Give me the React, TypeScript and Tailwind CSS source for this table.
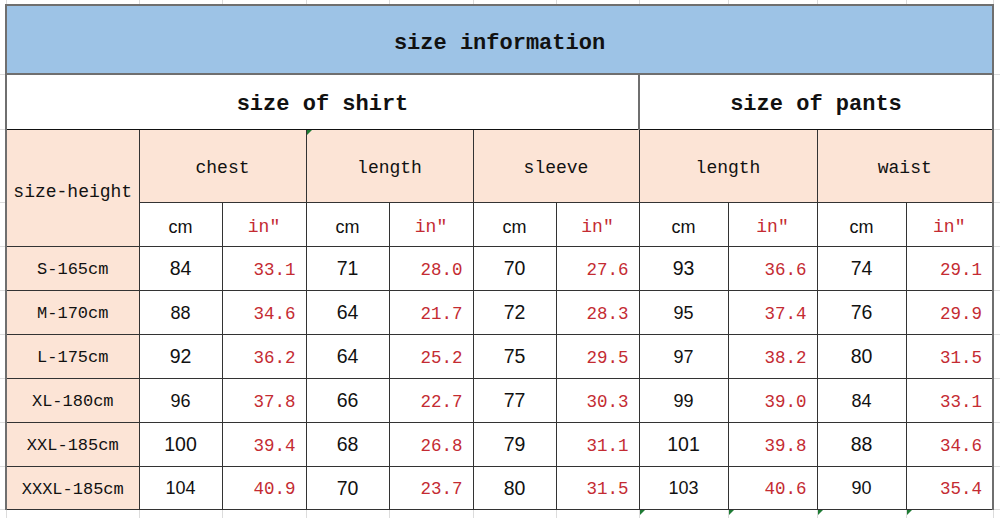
import React from 'react';

// column widths across the whole sheet, incl. the gutters left/right of the table
const COLS = [6, 133, 83, 84, 83, 84, 83, 83, 89, 89, 89, 87, 7];

type Cell = { v: number; big: boolean; inch: string };

const ROWS: { label: string; cells: Cell[] }[] = [
  {
    label: 'S-165cm',
    cells: [
      { v: 84, big: true, inch: '33.1' },
      { v: 71, big: true, inch: '28.0' },
      { v: 70, big: true, inch: '27.6' },
      { v: 93, big: true, inch: '36.6' },
      { v: 74, big: true, inch: '29.1' },
    ],
  },
  {
    label: 'M-170cm',
    cells: [
      { v: 88, big: false, inch: '34.6' },
      { v: 64, big: true, inch: '21.7' },
      { v: 72, big: true, inch: '28.3' },
      { v: 95, big: false, inch: '37.4' },
      { v: 76, big: true, inch: '29.9' },
    ],
  },
  {
    label: 'L-175cm',
    cells: [
      { v: 92, big: true, inch: '36.2' },
      { v: 64, big: true, inch: '25.2' },
      { v: 75, big: true, inch: '29.5' },
      { v: 97, big: false, inch: '38.2' },
      { v: 80, big: true, inch: '31.5' },
    ],
  },
  {
    label: 'XL-180cm',
    cells: [
      { v: 96, big: false, inch: '37.8' },
      { v: 66, big: true, inch: '22.7' },
      { v: 77, big: true, inch: '30.3' },
      { v: 99, big: false, inch: '39.0' },
      { v: 84, big: false, inch: '33.1' },
    ],
  },
  {
    label: 'XXL-185cm',
    cells: [
      { v: 100, big: true, inch: '39.4' },
      { v: 68, big: true, inch: '26.8' },
      { v: 79, big: true, inch: '31.1' },
      { v: 101, big: true, inch: '39.8' },
      { v: 88, big: true, inch: '34.6' },
    ],
  },
  {
    label: 'XXXL-185cm',
    cells: [
      { v: 104, big: false, inch: '40.9' },
      { v: 70, big: true, inch: '23.7' },
      { v: 80, big: true, inch: '31.5' },
      { v: 103, big: false, inch: '40.6' },
      { v: 90, big: false, inch: '35.4' },
    ],
  },
];

const MONO = "font-['Liberation_Mono',monospace]";
const SANS = "font-['Liberation_Sans',Arial,sans-serif]";

// green error marker Excel draws in a cell corner
const Flag = () => (
  <span className="absolute left-0 top-0 h-0 w-0 border-t-[5px] border-r-[5px] border-t-[#1e7b34] border-r-transparent" />
);

// thin gridline cells left / right of the table
const GutterL = () => <td className="border-b border-[#dcdcdc] p-0" />;
const GutterR = () => <td className="border-b border-[#dcdcdc] p-0" />;

const App: React.FC = () => {
  const head = 'border border-[#333] p-0 text-center';
  const flagged = [8, 9, 10, 11];

  return (
    <div className="h-[518px] w-[1000px] overflow-hidden bg-white text-[#111]">
      <table className="table-fixed border-collapse" style={{ width: 1000 }}>
        <colgroup>
          {COLS.map((w, i) => (
            <col key={i} style={{ width: w }} />
          ))}
        </colgroup>
        <tbody>
          {/* gridline strip above the table */}
          <tr className="h-[5px]">
            {COLS.map((_, i) => (
              <td key={i} className="border-r border-[#dcdcdc] p-0" />
            ))}
          </tr>

          <tr className="h-[69px]">
            <GutterL />
            <td
              colSpan={11}
              className={`border-2 border-[#6f6f6f] bg-[#9dc3e6] p-0 pt-[7px] text-center text-[22px] font-bold ${MONO}`}
            >
              size information
            </td>
            <GutterR />
          </tr>

          <tr className="h-[55px]">
            <GutterL />
            <td
              colSpan={7}
              className={`border-x-2 border-b border-x-[#6f6f6f] border-b-[#111] p-0 pt-[6px] text-center text-[22px] font-bold ${MONO}`}
            >
              size of shirt
            </td>
            <td
              colSpan={4}
              className={`border-r-2 border-l border-b border-r-[#6f6f6f] border-l-[#111] border-b-[#111] p-0 pt-[6px] text-center text-[22px] font-bold ${MONO}`}
            >
              size of pants
            </td>
            <GutterR />
          </tr>

          <tr className="h-[73px]">
            <GutterL />
            <td
              rowSpan={2}
              className={`${head} border-l-2 border-l-[#6f6f6f] bg-[#fce4d6] pt-[10px] text-[18px] ${MONO}`}
            >
              size-height
            </td>
            {['chest', 'length', 'sleeve', 'length', 'waist'].map((t, i) => (
              <td
                key={i}
                colSpan={2}
                className={`${head} relative bg-[#fce4d6] pt-[5px] text-[18px] ${MONO} ${i === 4 ? 'border-r-2 border-r-[#6f6f6f]' : ''}`}
              >
                {i === 1 && <Flag />}
                {t}
              </td>
            ))}
            <GutterR />
          </tr>

          <tr className="h-[44px]">
            <GutterL />
            {[0, 1, 2, 3, 4].map((i) => (
              <React.Fragment key={i}>
                <td className={`${head} pt-[6px] text-[18px] ${SANS}`}>cm</td>
                <td
                  className={`${head} pt-[6px] text-[18px] text-[#c42b32] ${MONO} ${i === 4 ? 'border-r-2 border-r-[#6f6f6f]' : ''}`}
                >
                  in"
                </td>
              </React.Fragment>
            ))}
            <GutterR />
          </tr>

          {ROWS.map((r, ri) => (
            <tr key={r.label} className={ri === ROWS.length - 1 ? 'h-[43px]' : 'h-[44px]'}>
              <GutterL />
              <td
                className={`border border-[#333] border-l-2 border-l-[#6f6f6f] bg-[#fce4d6] p-0 pt-[4px] text-center text-[17px] ${MONO}`}
              >
                {r.label}
              </td>
              {r.cells.map((c, ci) => (
                <React.Fragment key={ci}>
                  <td
                    className={`border border-[#333] p-0 pt-[2px] text-center ${SANS} ${c.big ? 'text-[19.5px]' : 'text-[18px]'}`}
                  >
                    {c.v}
                  </td>
                  <td
                    className={`border border-[#333] p-0 pt-[4px] pr-[10px] text-right text-[17.5px] text-[#c42b32] ${MONO} ${ci === 4 ? 'border-r-2 border-r-[#6f6f6f]' : ''}`}
                  >
                    {c.inch}
                  </td>
                </React.Fragment>
              ))}
              <GutterR />
            </tr>
          ))}

          {/* gridline strip below the table */}
          <tr className="h-[9px]">
            {COLS.map((_, i) => (
              <td key={i} className="relative border-r border-[#dcdcdc] p-0">
                {flagged.includes(i) && <Flag />}
              </td>
            ))}
          </tr>
        </tbody>
      </table>
    </div>
  );
};

export default App;
